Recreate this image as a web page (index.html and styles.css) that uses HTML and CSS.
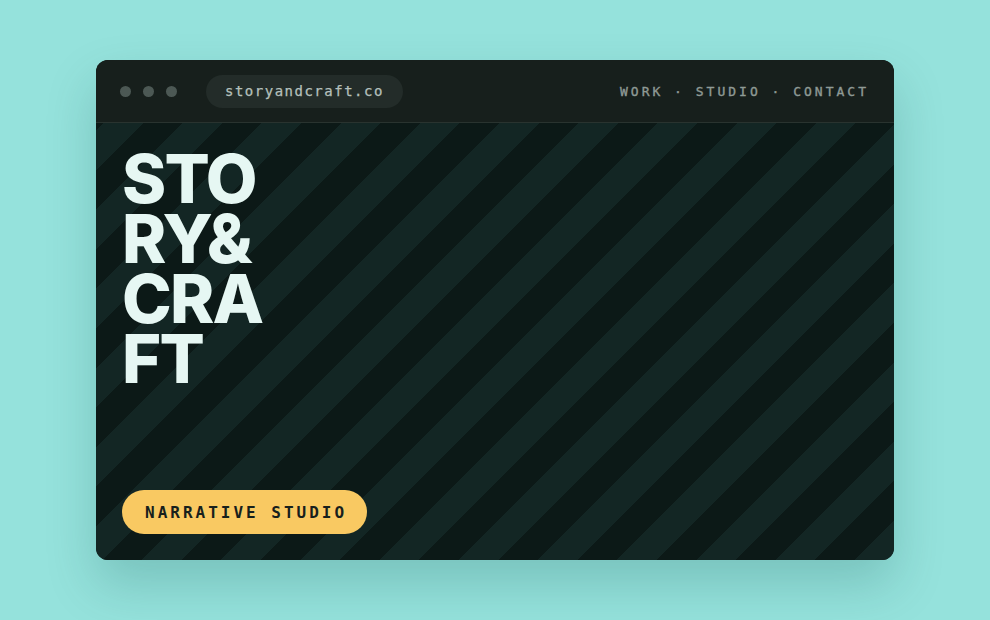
FILE: index.html
```html
<!DOCTYPE html>
<html lang="en">
<head>
<meta charset="utf-8">
<title>Story &amp; Craft</title>
<link rel="stylesheet" href="styles.css">
</head>
<body>
<div class="stage">
  <div class="window">
    <header class="bar">
      <div class="bar-left">
        <div class="dots"><span class="dot"></span><span class="dot"></span><span class="dot"></span></div>
        <div class="url">storyandcraft.co</div>
      </div>
      <nav class="nav">WORK · STUDIO · CONTACT</nav>
    </header>
    <main class="hero">
      <h1 class="title"><span class="line">STO</span><span class="line">RY&amp;</span><span class="line">CRA</span><span class="line">FT</span></h1>
      <div class="badge">NARRATIVE STUDIO</div>
    </main>
  </div>
</div>
</body>
</html>
```
FILE: styles.css
```css
* { box-sizing: border-box; }
html, body { margin: 0; padding: 0; }
body {
  width: 990px;
  height: 620px;
  background: #95e2dc;
  font-family: "Inter", "Liberation Sans", sans-serif;
  overflow: hidden;
}
.stage {
  width: 990px;
  height: 620px;
  display: flex;
  align-items: center;
  justify-content: center;
}
.window {
  width: 798px;
  height: 500px;
  border-radius: 12px;
  overflow: hidden;
  display: flex;
  flex-direction: column;
  background: #0c1917;
  box-shadow: 0 24px 50px rgba(20, 80, 76, 0.22);
}
.bar {
  height: 63px;
  flex: none;
  background: #171f1c;
  border-bottom: 1px solid #29332f;
  display: flex;
  align-items: center;
  justify-content: space-between;
  padding: 0 25px 0 24px;
}
.bar-left { display: flex; align-items: center; gap: 29px; }
.dots { display: flex; gap: 12px; }
.dot { width: 11px; height: 11px; border-radius: 50%; background: #4c5854; }
.url {
  height: 33px;
  display: flex;
  align-items: center;
  padding: 0 19px;
  border-radius: 17px;
  background: #232c29;
  color: #b5c0bc;
  font-family: "DejaVu Sans Mono", "Liberation Mono", monospace;
  font-size: 14px;
  letter-spacing: 1.5px;
  -webkit-text-stroke: 0.25px #b5c0bc;
}
.nav {
  font-family: "DejaVu Sans Mono", "Liberation Mono", monospace;
  font-size: 13px;
  letter-spacing: 3px;
  color: #8f9a95;
  -webkit-text-stroke: 0.35px #8f9a95;
}
.hero {
  flex: 1;
  display: flex;
  flex-direction: column;
  justify-content: space-between;
  align-items: flex-start;
  padding: 26px 26px 26px 26px;
  background: repeating-linear-gradient(-45deg, #132624 0 28px, #0c1917 28px 56px);
}
.title {
  margin: 0;
  font-family: "Inter", "Liberation Sans", sans-serif;
  font-weight: 800;
  font-size: 67px;
  line-height: 60px;
  letter-spacing: -1.8px;
  color: #e6f7f3;
}
.line { display: block; }
.badge {
  height: 44px;
  display: flex;
  align-items: center;
  padding: 0 20px 0 23px;
  border-radius: 22px;
  background: #f9c962;
  color: #17201c;
  font-family: "DejaVu Sans Mono", "Liberation Mono", monospace;
  font-weight: bold;
  font-size: 16px;
  letter-spacing: 3px;
}
```
